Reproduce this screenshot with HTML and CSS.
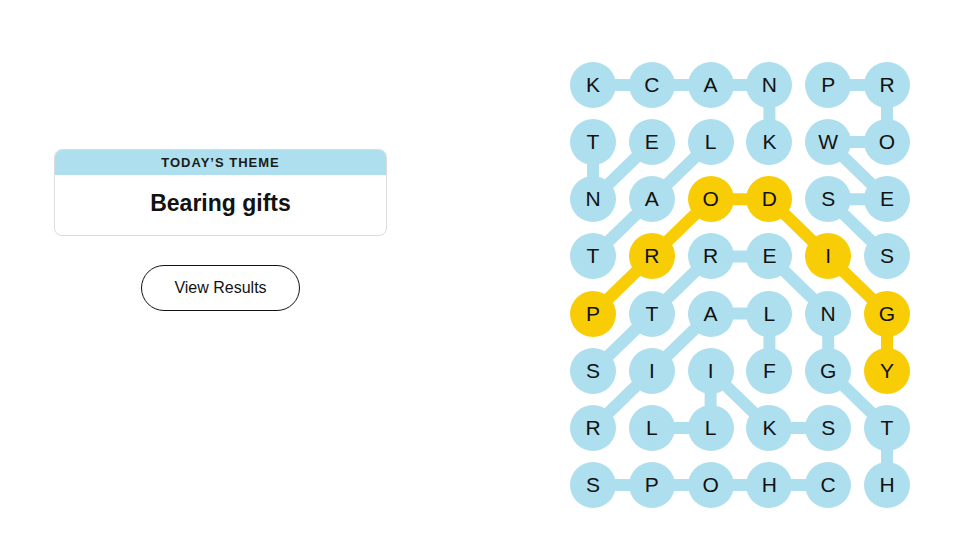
FILE: index.html
```html
<!DOCTYPE html>
<html>
<head>
<meta charset="utf-8">
<link rel="stylesheet" href="styles.css">
</head>
<body>
<main class="page">
  <section class="side">
    <div class="theme-card">
      <div class="theme-head">TODAY’S THEME</div>
      <div class="theme-body">Bearing gifts</div>
    </div>
    <button class="results-btn">View Results</button>
  </section>
  <section class="board">
    <svg class="links" width="340" height="446" viewBox="0 0 340 446">
      <g stroke="#aedfee" stroke-width="12" stroke-linecap="round">
        <line x1="23" y1="23" x2="81.8" y2="23"/>
        <line x1="81.8" y1="23" x2="140.6" y2="23"/>
        <line x1="140.6" y1="23" x2="199.4" y2="23"/>
        <line x1="199.4" y1="23" x2="199.4" y2="80.1"/>
        <line x1="258.2" y1="23" x2="317" y2="23"/>
        <line x1="317" y1="23" x2="317" y2="80.1"/>
        <line x1="23" y1="80.1" x2="23" y2="137.3"/>
        <line x1="81.8" y1="80.1" x2="23" y2="137.3"/>
        <line x1="140.6" y1="80.1" x2="81.8" y2="137.3"/>
        <line x1="81.8" y1="137.3" x2="23" y2="194.4"/>
        <line x1="258.2" y1="80.1" x2="317" y2="80.1"/>
        <line x1="258.2" y1="80.1" x2="317" y2="137.3"/>
        <line x1="258.2" y1="137.3" x2="317" y2="137.3"/>
        <line x1="258.2" y1="137.3" x2="317" y2="194.4"/>
        <line x1="140.6" y1="194.4" x2="199.4" y2="194.4"/>
        <line x1="140.6" y1="194.4" x2="81.8" y2="251.6"/>
        <line x1="199.4" y1="194.4" x2="258.2" y2="251.6"/>
        <line x1="81.8" y1="251.6" x2="23" y2="308.7"/>
        <line x1="140.6" y1="251.6" x2="199.4" y2="251.6"/>
        <line x1="140.6" y1="251.6" x2="81.8" y2="308.7"/>
        <line x1="199.4" y1="251.6" x2="199.4" y2="308.7"/>
        <line x1="258.2" y1="251.6" x2="258.2" y2="308.7"/>
        <line x1="81.8" y1="308.7" x2="23" y2="365.9"/>
        <line x1="140.6" y1="308.7" x2="140.6" y2="365.9"/>
        <line x1="140.6" y1="308.7" x2="199.4" y2="365.9"/>
        <line x1="258.2" y1="308.7" x2="317" y2="365.9"/>
        <line x1="81.8" y1="365.9" x2="140.6" y2="365.9"/>
        <line x1="199.4" y1="365.9" x2="258.2" y2="365.9"/>
        <line x1="317" y1="365.9" x2="317" y2="423"/>
        <line x1="23" y1="423" x2="81.8" y2="423"/>
        <line x1="81.8" y1="423" x2="140.6" y2="423"/>
        <line x1="140.6" y1="423" x2="199.4" y2="423"/>
        <line x1="199.4" y1="423" x2="258.2" y2="423"/>
      </g>
      <g stroke="#f8cd05" stroke-width="12" stroke-linecap="round">
        <line x1="140.6" y1="137.3" x2="199.4" y2="137.3"/>
        <line x1="140.6" y1="137.3" x2="81.8" y2="194.4"/>
        <line x1="81.8" y1="194.4" x2="23" y2="251.6"/>
        <line x1="199.4" y1="137.3" x2="258.2" y2="194.4"/>
        <line x1="258.2" y1="194.4" x2="317" y2="251.6"/>
        <line x1="317" y1="251.6" x2="317" y2="308.7"/>
      </g>
    </svg>
    <div class="grid">
      <div class="cell">K</div><div class="cell">C</div><div class="cell">A</div><div class="cell">N</div><div class="cell">P</div><div class="cell">R</div>
      <div class="cell">T</div><div class="cell">E</div><div class="cell">L</div><div class="cell">K</div><div class="cell">W</div><div class="cell">O</div>
      <div class="cell">N</div><div class="cell">A</div><div class="cell found">O</div><div class="cell found">D</div><div class="cell">S</div><div class="cell">E</div>
      <div class="cell">T</div><div class="cell found">R</div><div class="cell">R</div><div class="cell">E</div><div class="cell found">I</div><div class="cell">S</div>
      <div class="cell found">P</div><div class="cell">T</div><div class="cell">A</div><div class="cell">L</div><div class="cell">N</div><div class="cell found">G</div>
      <div class="cell">S</div><div class="cell">I</div><div class="cell">I</div><div class="cell">F</div><div class="cell">G</div><div class="cell found">Y</div>
      <div class="cell">R</div><div class="cell">L</div><div class="cell">L</div><div class="cell">K</div><div class="cell">S</div><div class="cell">T</div>
      <div class="cell">S</div><div class="cell">P</div><div class="cell">O</div><div class="cell">H</div><div class="cell">C</div><div class="cell">H</div>
    </div>
  </section>
</main>
</body>
</html>
```

FILE: styles.css
```css
* { box-sizing: border-box; }
html, body {
  margin: 0;
  background: #ffffff;
  font-family: "Liberation Sans", Arial, sans-serif;
  color: #121212;
}
.page {
  width: 980px;
  height: 560px;
  display: flex;
  align-items: flex-start;
  padding: 62px 0 0 54px;
}
.side {
  width: 333px;
  margin-top: 87px;
  display: flex;
  flex-direction: column;
  align-items: center;
}
.theme-card {
  width: 333px;
  border: 1px solid #dcdcdc;
  border-radius: 8px;
  overflow: hidden;
}
.theme-head {
  background: #aedfee;
  height: 25px;
  line-height: 26px;
  text-align: center;
  font-size: 13px;
  font-weight: 700;
  letter-spacing: 1px;
  color: #1a1a1a;
}
.theme-body {
  height: 60px;
  display: flex;
  align-items: center;
  justify-content: center;
  font-size: 23px;
  font-weight: 700;
  color: #121212;
  padding-bottom: 4px;
}
.results-btn {
  margin-top: 29px;
  width: 159px;
  height: 46px;
  border: 1px solid #121212;
  border-radius: 23px;
  background: #fff;
  font-family: "Liberation Sans", Arial, sans-serif;
  font-size: 16px;
  color: #121212;
  padding: 0;
}
.board {
  position: relative;
  margin-left: 183px;
  width: 340px;
  height: 446px;
}
.links {
  position: absolute;
  left: 0;
  top: 0;
}
.grid {
  position: relative;
  display: grid;
  grid-template-columns: repeat(6, 46px);
  grid-auto-rows: 46px;
  column-gap: 12.8px;
  row-gap: 11.14px;
}
.cell {
  width: 46px;
  height: 46px;
  border-radius: 50%;
  background: #aedfee;
  display: flex;
  align-items: center;
  justify-content: center;
  font-size: 21px;
  color: #121212;
}
.cell.found {
  background: #f8cd05;
}
```
